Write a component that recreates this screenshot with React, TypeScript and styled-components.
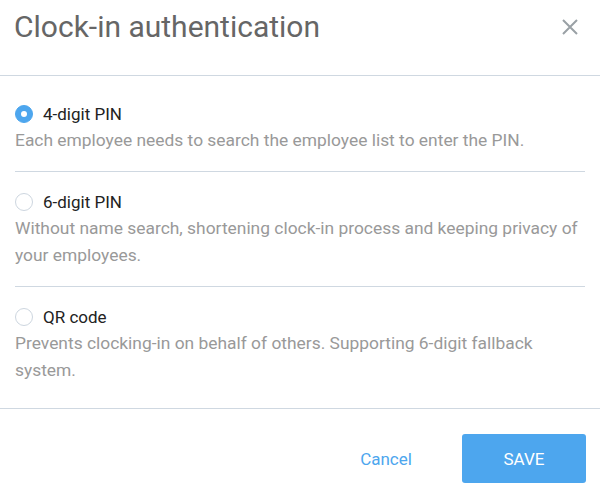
import { useState } from "react";
import styled, { createGlobalStyle } from "styled-components";

const GlobalStyle = createGlobalStyle`
    html, body {
        margin: 0;
        padding: 0;
        background: #ffffff;
        font-family: Roboto, "Liberation Sans", Arial, sans-serif;
    }
`;

//Caixa do diálogo
const Dialog = styled.div`
    width: 600px;
    height: 495px;
    display: flex;
    flex-direction: column;
    background: #ffffff;
`;

const Header = styled.div`
    height: 76px;
    box-sizing: border-box;
    display: flex;
    align-items: flex-start;
    justify-content: space-between;
    padding: 8px 22px 0 14px;
    border-bottom: 1px solid #cfd8e1;
`;

const Title = styled.h1`
    margin: 0;
    font-size: 30px;
    font-weight: 400;
    line-height: 38px;
    color: #666666;
`;

const CloseButton = styled.button`
    border: none;
    background: none;
    padding: 0;
    margin-top: 11px;
    width: 16px;
    height: 16px;
    cursor: pointer;
    display: flex;
`;

const List = styled.div`
    padding: 8px 15px 7px;
    border-bottom: 1px solid #cfd8e1;
`;

const Option = styled.label`
    display: block;
    padding: 17px 0 17px;
    cursor: pointer;

    & + & {
        border-top: 1px solid #cfd8e1;
    }
`;

const OptionHead = styled.div`
    display: flex;
    align-items: center;
    gap: 10px;
    height: 26px;
`;

const Radio = styled.span<{ $checked: boolean }>`
    width: 18px;
    height: 18px;
    box-sizing: border-box;
    border-radius: 50%;
    flex-shrink: 0;
    display: flex;
    align-items: center;
    justify-content: center;
    background: ${(p) => (p.$checked ? "#4da6ee" : "#ffffff")};
    border: 1px solid ${(p) => (p.$checked ? "#4da6ee" : "#cdd6df")};

    &::after {
        content: "";
        width: 6px;
        height: 6px;
        border-radius: 50%;
        background: #ffffff;
        display: ${(p) => (p.$checked ? "block" : "none")};
    }
`;

const OptionLabel = styled.span`
    font-size: 17px;
    color: #222222;
`;

const Description = styled.p`
    margin: 0;
    font-size: 17.4px;
    line-height: 27px;
    color: #999999;
`;

const Footer = styled.div`
    flex: 1;
    display: flex;
    justify-content: flex-end;
    align-items: flex-start;
    gap: 14px;
    padding: 25px 14px 0 0;
`;

const ActionButton = styled.button<{ $primary?: boolean }>`
    width: 124px;
    height: 49px;
    border: none;
    border-radius: 3px;
    font-family: inherit;
    font-size: 17px;
    cursor: pointer;
    color: ${(p) => (p.$primary ? "#ffffff" : "#4da6ee")};
    background: ${(p) => (p.$primary ? "#4da6ee" : "transparent")};
`;

const options = [
    {
        id: "pin4",
        label: "4-digit PIN",
        desc: "Each employee needs to search the employee list to enter the PIN.",
    },
    {
        id: "pin6",
        label: "6-digit PIN",
        desc: "Without name search, shortening clock-in process and keeping privacy of your employees.",
    },
    {
        id: "qr",
        label: "QR code",
        desc: "Prevents clocking-in on behalf of others. Supporting 6-digit fallback system.",
    },
];

const App = () => {
    const [selected, setSelected] = useState("pin4");

    return (
        <>
            <GlobalStyle />
            <Dialog>
                <Header>
                    <Title>Clock-in authentication</Title>
                    <CloseButton aria-label="Close">
                        <svg width="16" height="16" viewBox="0 0 16 16">
                            <path d="M1 1L15 15M15 1L1 15" stroke="#9aa1a6" strokeWidth="2" />
                        </svg>
                    </CloseButton>
                </Header>
                <List>
                    {options.map((o) => (
                        <Option key={o.id} onClick={() => setSelected(o.id)}>
                            <OptionHead>
                                <Radio $checked={selected === o.id} />
                                <OptionLabel>{o.label}</OptionLabel>
                            </OptionHead>
                            <Description>{o.desc}</Description>
                        </Option>
                    ))}
                </List>
                <Footer>
                    <ActionButton>Cancel</ActionButton>
                    <ActionButton $primary>SAVE</ActionButton>
                </Footer>
            </Dialog>
        </>
    );
};

export default App;
